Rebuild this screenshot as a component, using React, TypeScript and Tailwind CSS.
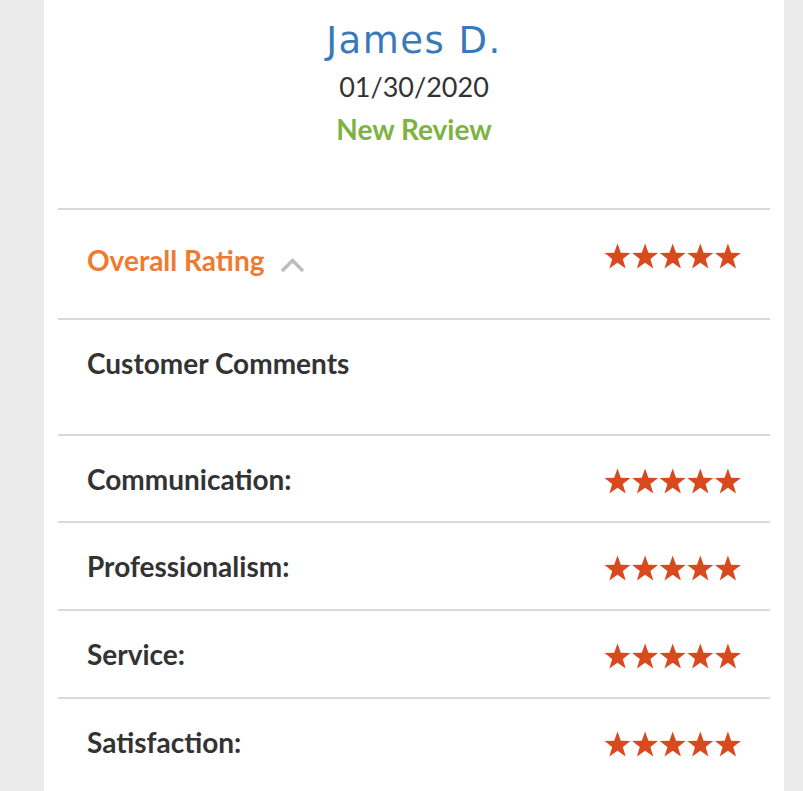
import React from 'react';

const Stars: React.FC = () => (
  <svg width="138" height="27" viewBox="0 0 138 27" className="block">
    {[0, 1, 2, 3, 4].map((i) => (
      <polygon
        key={i}
        transform={`translate(${i * 27.6 + 0.5}, 0.5)`}
        points="13,0 16.3,9.2 26,9.4 18.3,15.4 21.2,25 13,19.3 4.8,25 7.7,15.4 0,9.4 9.7,9.2"
        fill="#d84a1e"
      />
    ))}
  </svg>
);

const rows = ['Communication:', 'Professionalism:', 'Service:', 'Satisfaction:'];

export default function App() {
  return (
    <div className="min-h-[791px] bg-[#ebebeb] font-['Lato','Liberation_Sans',sans-serif]">
      <div className="ml-[44px] w-[740px] min-h-[791px] bg-white px-[14px]">
        <div className="flex flex-col items-center pt-[19px] pb-[63px]">
          <div className="h-[44px] text-[37px] leading-[44px] text-[#3a79b9] tracking-[1.5px] font-['DejaVu_Sans','Liberation_Sans',sans-serif]">
            James D.
          </div>
          <div className="mt-[8px] h-[32px] text-[27px] leading-[32px] text-[#333]">01/30/2020</div>
          <div className="mt-[10px] h-[32px] text-[28px] leading-[32px] font-bold text-[#7cb342]">New Review</div>
        </div>

        <div className="flex h-[110px] items-start justify-between border-t-2 border-[#d9d9d9] pl-[29px] pr-[28px] pt-[34px]">
          <div className="flex h-[32px] items-center gap-[16px]">
            <span className="text-[28px] leading-[32px] font-bold text-[#f07a30]">Overall Rating</span>
            <svg width="25" height="16" viewBox="0 0 25 16" className="mt-[10px]">
              <polyline points="2,14 12.5,3.5 23,14" fill="none" stroke="#bdbdbd" strokeWidth="3.5" />
            </svg>
          </div>
          <div className="mt-[-1px]">
            <Stars />
          </div>
        </div>

        <div className="h-[116px] border-t-2 border-[#d9d9d9] pl-[29px] pt-[27px]">
          <div className="h-[32px] text-[28px] leading-[32px] font-bold text-[#333]">Customer Comments</div>
        </div>

        {rows.map((r, i) => (
          <div
            key={r}
            className={`flex items-start justify-between border-t-2 border-[#d9d9d9] pl-[29px] pr-[28px] pt-[27px] ${i === 0 ? 'h-[87px]' : 'h-[88px]'}`}
          >
            <div className="h-[32px] text-[28px] leading-[32px] font-bold text-[#333]">{r}</div>
            <div className="mt-[5px]">
              <Stars />
            </div>
          </div>
        ))}
      </div>
    </div>
  );
}
